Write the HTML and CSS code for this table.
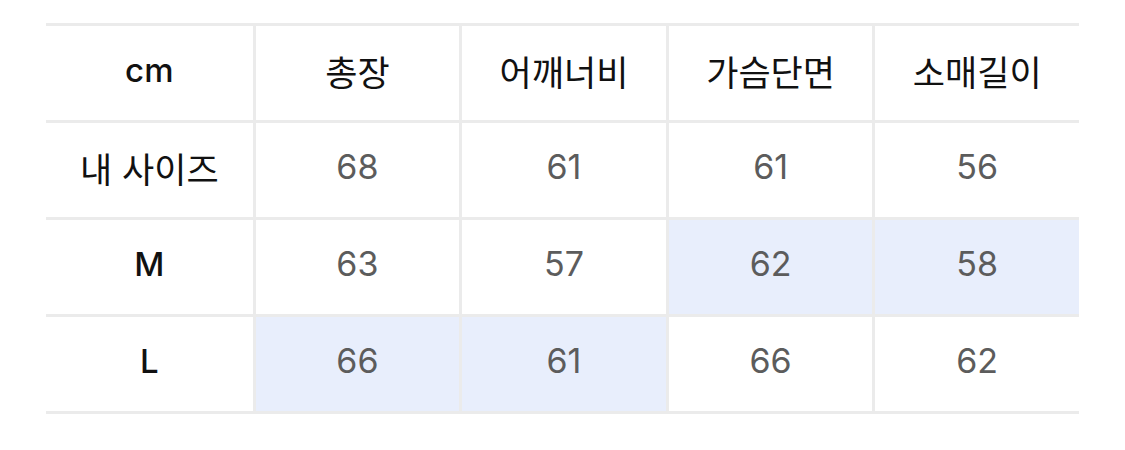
FILE: index.html
```html
<!DOCTYPE html>
<html lang="ko">
<head>
<meta charset="utf-8">
<link rel="stylesheet" href="styles.css">
</head>
<body>
<div class="page">
  <div class="size-table">
    <div class="cell head">cm</div>
    <div class="cell head ko">총장</div>
    <div class="cell head ko">어깨너비</div>
    <div class="cell head ko">가슴단면</div>
    <div class="cell head ko">소매길이</div>

    <div class="cell head ko">내 사이즈</div>
    <div class="cell num">68</div>
    <div class="cell num">61</div>
    <div class="cell num">61</div>
    <div class="cell num">56</div>

    <div class="cell head">M</div>
    <div class="cell num">63</div>
    <div class="cell num">57</div>
    <div class="cell num hl">62</div>
    <div class="cell num hl">58</div>

    <div class="cell head">L</div>
    <div class="cell num hl">66</div>
    <div class="cell num hl">61</div>
    <div class="cell num">66</div>
    <div class="cell num">62</div>
  </div>
</div>
</body>
</html>
```

FILE: styles.css
```css
* { box-sizing: border-box; }
html, body { margin: 0; padding: 0; background: #ffffff; }
.page {
  padding: 23px 0 0 46px;
}
.size-table {
  width: 1033px;
  display: grid;
  grid-template-columns: repeat(5, 1fr);
  border-top: 3px solid #ebebeb;
  font-family: "Inter", "Noto Sans CJK KR", sans-serif;
}
.cell {
  height: 97px;
  padding-bottom: 6px;
  border-bottom: 3px solid #ebebeb;
  border-left: 3px solid #ebebeb;
  display: flex;
  align-items: center;
  justify-content: center;
  line-height: 1;
}
.cell:nth-child(5n+1) { border-left: none; }
.head {
  color: #111111;
  font-weight: 500;
  font-size: 33px;
}
.ko {
  font-family: "Noto Sans CJK KR", sans-serif;
  font-weight: 400;
  font-size: 35px;
}
.num {
  color: #5c5c5c;
  font-size: 34px;
  font-weight: 400;
}
.hl { background: #e8eefc; }
```
